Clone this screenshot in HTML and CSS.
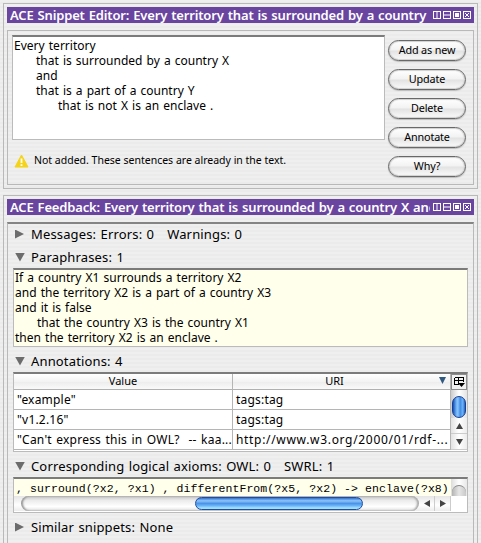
FILE: index.html
```
<!DOCTYPE html>
<html lang="en">
<head>
<meta charset="utf-8">
<title>ACE View</title>
<link rel="stylesheet" href="styles.css">
</head>
<body>
<svg class="defs" width="0" height="0">
  <symbol id="controls" viewBox="0 0 40 10">
    <g fill="none" stroke="#fff" shape-rendering="crispEdges">
      <path d="M1.500 1.500h7v7h-7zM11.500 1.500h7v7h-7zM21.500 1.500h7v7h-7zM31.500 1.500h7v7h-7z"/>
    </g>
    <path d="M4.500 1h1v8h-1zM11 4.500h8v1h-8zM23 3h4v4h-4z" fill="#fff"/>
    <path d="M33 3l4 4M37 3l-4 4" stroke="#fff"/>
  </symbol>
</svg>

<section class="view editor">
  <header class="titlebar">
    <h1 class="title">ACE Snippet Editor: Every territory that is surrounded by a country X</h1>
    <svg class="controls" width="40" height="10"><use href="#controls"/></svg>
  </header>
  <div class="editor-body">
    <div class="editor-main">
      <div class="snippet">
        <p class="line">Every territory</p>
        <p class="line in1">that is surrounded by a country X</p>
        <p class="line in1">and</p>
        <p class="line in1">that is a part of a country Y</p>
        <p class="line in2">that is not X is an enclave .</p>
      </div>
      <div class="status">
        <svg width="15" height="14" viewBox="0 0 15 14"><path d="M7.500 1L14 13H1z" fill="#f5d417" stroke="#f5d417" stroke-linejoin="round"/><path d="M7.500 4.500v4.500M7.500 10.300v1.800" stroke="#fff" stroke-width="1.800"/></svg>
        <span>Not added. These sentences are already in the text.</span>
      </div>
    </div>
    <div class="buttons">
      <button>Add as new</button>
      <button>Update</button>
      <button>Delete</button>
      <button>Annotate</button>
      <button>Why?</button>
    </div>
  </div>
</section>

<section class="view feedback">
  <header class="titlebar">
    <h1 class="title">ACE Feedback: Every territory that is surrounded by a country X and</h1>
    <svg class="controls" width="40" height="10"><use href="#controls"/></svg>
  </header>
  <div class="feedback-body">
    <h2 class="fold"><i class="tri closed"></i><span>Messages: Errors: 0 &nbsp; Warnings: 0</span></h2>
    <h2 class="fold fold-paraphrases"><i class="tri"></i><span>Paraphrases: 1</span></h2>
    <div class="paraphrase">
      <p class="line">If a country X1 surrounds a territory X2</p>
      <p class="line">and the territory X2 is a part of a country X3</p>
      <p class="line">and it is false</p>
      <p class="line in1">that the country X3 is the country X1</p>
      <p class="line">then the territory X2 is an enclave .</p>
    </div>
    <h2 class="fold fold-annotations"><i class="tri"></i><span>Annotations: 4</span></h2>
    <div class="table-frame">
      <div class="grid">
        <div class="th">Value</div>
        <div class="th">URI<svg class="sort" width="7" height="7"><path d="M0 0h7L3.500 7z" fill="#315a80"/></svg></div>
        <div class="td">"example"</div><div class="td">tags:tag</div>
        <div class="td">"v1.2.16"</div><div class="td">tags:tag</div>
        <div class="td long">"Can't express this in OWL?&nbsp; -- kaa...</div><div class="td url">http://www.w3.org/2000/01/rdf-...</div>
      </div>
      <div class="vscroll">
        <div class="picker"><svg width="12" height="12"><path d="M1.500 1.500h9v4M1.500 1.500v7h4M1.500 4.500h9M5.500 1.500v7" fill="none" stroke="#000" shape-rendering="crispEdges"/><path d="M5 7h7L8.500 11z"/></svg></div>
        <div class="vtrack"><div class="vthumb"></div></div>
        <div class="step"><svg width="7" height="6"><path d="M0 6h7L3.500 0z" fill="#444"/></svg></div>
        <div class="step"><svg width="7" height="6"><path d="M0 0h7L3.500 6z" fill="#444"/></svg></div>
      </div>
    </div>
    <h2 class="fold fold-axioms"><i class="tri"></i><span>Corresponding logical axioms: OWL: 0 &nbsp; SWRL: 1</span></h2>
    <div class="axioms">
      <div class="code-row"><code>, surround(?x2, ?x1) , differentFrom(?x5, ?x2) -&gt; enclave(?x8)</code><div class="corner"><div class="cap"></div></div></div>
      <div class="hscroll">
        <div class="htrack"><div class="hthumb"></div></div>
        <div class="hstep"><svg width="6" height="7"><path d="M6 0v7L0 3.500z" fill="#444"/></svg></div>
        <div class="hstep"><svg width="6" height="7"><path d="M0 0v7l6-3.500z" fill="#444"/></svg></div>
      </div>
    </div>
    <h2 class="fold fold-similar"><i class="tri closed"></i><span>Similar snippets: None</span></h2>
  </div>
</section>
</body>
</html>
```
FILE: styles.css
```
* { box-sizing: border-box; }
html, body { height: 543px; overflow: hidden; }
body {
  margin: 0;
  padding: 3px 3px 0;
  font: 12px/15px "Noto Sans", "Open Sans", sans-serif;
  color: #000;
  background: repeating-linear-gradient(#efefef 0 2px, #ebebeb 2px 4px);
}
h1, h2, p { margin: 0; font-weight: 400; }
.defs { display: block; position: absolute; }

.view { width: 475px; border: 1px solid #b9b9b9; padding: 3px; }
.editor { height: 186px; }
.feedback { height: 360px; margin-top: 6px; border-bottom: 0; }

.titlebar {
  display: flex;
  align-items: center;
  height: 16px;
  padding: 0 2px 0 3px;
  background: #6a459f;
}
.title {
  flex: 1;
  overflow: hidden;
  margin-right: 2px;
  white-space: nowrap;
  color: #fff;
  font-size: 13px;
  font-weight: 600;
  line-height: 16px;
  letter-spacing: -0.16px;
  word-spacing: 0.8px;
}
.controls { flex: none; }

.editor-body {
  display: flex;
  height: 155px;
  margin-top: 7px;
  border: 1px solid #b9b9b9;
  padding: 4px;
}
.editor-main { width: 373px; }
.snippet {
  height: 105px;
  padding: 1px 1px;
  background: #fff;
  border: 1px solid #bbb;
  border-top: 2px solid #7b7b7b;
}
.line { height: 15px; white-space: pre; letter-spacing: 0.02px; word-spacing: 0.9px; }
.in1 { padding-left: 22px; }
.in2 { padding-left: 44px; }
.status {
  display: flex;
  align-items: center;
  gap: 5px;
  margin: 13px 0 0 2px;
  font-size: 10.5px;
}

.buttons { display: flex; flex-direction: column; gap: 8px; margin: 5px 0 0 3px; }
button {
  width: 78px;
  height: 21px;
  padding: 0 0 1px;
  border: 1px solid #686868;
  border-radius: 11px;
  font: 10.8px/18px "Noto Sans", sans-serif;
  letter-spacing: -0.15px;
  color: #000;
  background: linear-gradient(#fff 0, #f2f2f2 48%, #e2e2e2 52%, #fbfbfb 100%);
  box-shadow: inset 0 0 1px 1px #cfcfcf, 0 1px 1px #bcbcbc;
}

.feedback-body {
  height: 340px;
  margin-top: 7px;
  padding: 0 5px;
  border: 1px solid #b9b9b9;
  border-top: 2px solid #858585;
}
.fold {
  display: flex;
  align-items: center;
  height: 20px;
  padding-left: 2px;
  font-size: 13px;
  line-height: 20px;
  letter-spacing: 0.15px;
  word-spacing: 0.8px;
  white-space: pre;
}
.fold-paraphrases { margin-top: 3px; }
.fold-annotations,
.fold-axioms,
.fold-similar { margin-top: 4px; }
.tri {
  width: 10px;
  height: 9px;
  margin-right: 6px;
  background: #6c6c6c;
  clip-path: polygon(0 0, 100% 0, 50% 100%);
}
.tri.closed { clip-path: polygon(0 0, 90% 50%, 0 100%); }

.paraphrase {
  height: 79px;
  margin-top: 1px;
  padding: 0 1px;
  width: 455px;
  background: #ffffec;
  border: 1px solid #bbb;
  border-top: 2px solid #7b7b7b;
}

.table-frame {
  display: flex;
  width: 455px;
  height: 80px;
  margin-top: 1px;
  border: 1px solid #bbb;
  border-top: 2px solid #7b7b7b;
  background: #fff;
}
.grid {
  display: grid;
  grid-template-columns: 219px 218px;
  grid-template-rows: 16px 20px 20px 20px;
}
.th {
  position: relative;
  border-right: 1px solid #b5b5b5;
  border-bottom: 1px solid #b0b0b0;
  background: linear-gradient(#fff, #f3f3f3 50%, #ececec 51%, #fafafa);
  font-size: 11px;
  line-height: 14px;
  text-align: center;
}
.th:nth-child(2) { padding-right: 14px; }
.sort { position: absolute; right: 4px; top: 3px; }
.td {
  overflow: hidden;
  padding-left: 3px;
  border-right: 1px solid #b5b5b5;
  border-bottom: 1px solid #b5b5b5;
  line-height: 20px;
  letter-spacing: 0.2px;
  white-space: nowrap;
}
.long { letter-spacing: 0.22px; word-spacing: 1.1px; }
.url { letter-spacing: 0.68px; }

.vscroll { display: flex; flex-direction: column; width: 16px; }
.picker {
  display: flex;
  justify-content: center;
  align-items: center;
  height: 16px;
  border: 1px solid #8c8c8c;
  background: #f2f2f2;
}
.vtrack { height: 28px; padding-top: 6px; background: linear-gradient(90deg, #ccc, #fff 50%, #e4e4e4); }
.vthumb {
  width: 14px;
  height: 22px;
  margin: 0 auto;
  border: 1px solid #1b3f92;
  border-radius: 7px;
  background: linear-gradient(90deg, #1450b8, #6fb2f6 28%, #8cc4fa 40%, #3f8ce6 60%, #6fb4f6 82%, #1f5fc2);
}
.step {
  display: flex;
  justify-content: center;
  align-items: center;
  height: 16px;
  border-bottom: 1px solid #ccc;
  background: linear-gradient(90deg, #e2e2e2, #fff 50%, #ececec);
}

.axioms {
  width: 455px;
  height: 36px;
  margin-top: 1px;
  border: 1px solid #bbb;
  border-top: 2px solid #7b7b7b;
  background: #fff;
}
.code-row { display: flex; height: 17px; }
code {
  width: 437px;
  padding-left: 2px;
  background: #ffffec;
  font: 11.5px/20px "Liberation Mono", monospace;
  letter-spacing: 0.08px;
  white-space: pre;
}
.corner { width: 16px; overflow: hidden; padding: 6px 1px 0; background: linear-gradient(90deg, #ddd, #fff 50%, #e8e8e8); }
.cap { height: 20px; border-radius: 8px; border-top: 1px solid #888; background: linear-gradient(90deg, #b4b4b4, #e6e6e6 50%, #c8c8c8); }
.hscroll {
  display: flex;
  width: 437px;
  height: 15px;
  background: linear-gradient(#e6e6e6, #fff 60%, #ececec);
}
.htrack {
  width: 398px;
  margin: 0 0 0 7px;
  padding: 1px 0 0 174px;
  border-radius: 8px;
  background: linear-gradient(#c4c4c4, #ececec 30%, #fff 70%, #e3e3e3);
  box-shadow: inset 2px 0 2px #999, inset -2px 0 2px #aaa;
}
.hthumb {
  width: 168px;
  height: 13px;
  border: 1px solid #1d4da6;
  border-radius: 7px;
  background: linear-gradient(#2f72d0, #8fc4f8 25%, #4b93e8 50%, #69b4f8 70%, #a2e0ff 90%);
}
.hstep {
  display: flex;
  justify-content: center;
  align-items: center;
  width: 16px;
  border-right: 1px solid #ccc;
}
```
